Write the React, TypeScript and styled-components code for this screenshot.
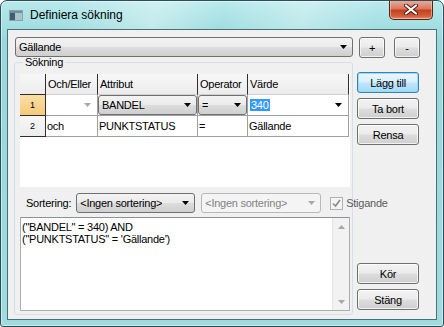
import React from "react";
import styled, { createGlobalStyle } from "styled-components";

const GlobalStyle = createGlobalStyle`
  html, body {
    margin: 0;
    padding: 0;
    background: #fff;
    overflow: hidden;
  }
  body {
    font-family: "Liberation Sans", Arial, sans-serif;
    font-size: 11px;
    letter-spacing: -0.25px;
    color: #000;
  }
`;

const btnFace = "linear-gradient(#f3f3f3 0, #ebebeb 48%, #dddddd 52%, #cfcfcf 100%)";

const Window = styled.div`
  box-sizing: border-box;
  width: 444px;
  height: 327px;
  display: flex;
  flex-direction: column;
  border: 1px solid #2f4c57;
  border-radius: 7px 7px 3px 3px;
  background: linear-gradient(#b8eaec 0, #97d8dc 40px, #9edcdf 100%);
  box-shadow: inset 0 0 0 1px rgba(255, 255, 255, 0.45);
  overflow: hidden;
`;

const TitleBar = styled.div`
  height: 28px;
  flex: none;
  display: flex;
  align-items: center;
  padding-left: 7px;
  background: linear-gradient(
    100deg,
    rgba(255, 255, 255, 0) 15%,
    rgba(255, 255, 255, 0.35) 35%,
    rgba(255, 255, 255, 0) 50%,
    rgba(255, 255, 255, 0.3) 68%,
    rgba(255, 255, 255, 0) 85%
  );
`;

const TitleText = styled.span`
  margin-left: 6px;
  font-family: "Liberation Sans", Arial, sans-serif;
  font-size: 12px;
  letter-spacing: 0;
  color: #000;
`;

const CloseButton = styled.div`
  box-sizing: border-box;
  align-self: flex-start;
  margin: -1px 10px 0 auto;
  width: 44px;
  height: 20px;
  display: flex;
  align-items: center;
  justify-content: center;
  border: 1px solid #5a2215;
  border-top: none;
  border-radius: 0 0 5px 5px;
  background: linear-gradient(#eab1a3 0, #d9785f 45%, #c5401f 55%, #d2603d 85%, #e09071 100%);
  box-shadow: inset 0 0 0 1px rgba(255, 220, 210, 0.5);
`;

const Client = styled.div`
  flex: 1;
  display: flex;
  flex-direction: column;
  margin: 0 6px 6px;
  border: 1px solid #4b6e78;
  background: #f0f0f0;
`;

const TopRow = styled.div`
  display: flex;
  align-items: flex-start;
  height: 20px;
  padding: 7px 0 0 7px;
`;

const Combo = styled.div<{ $w?: number; $disabled?: boolean; $h?: number }>`
  box-sizing: border-box;
  flex: none;
  width: ${(p) => (p.$w ? `${p.$w}px` : "100%")};
  height: ${(p) => (p.$h ? `${p.$h}px` : "100%")};
  display: flex;
  align-items: center;
  justify-content: space-between;
  gap: 4px;
  padding: 0 5px 0 3px;
  border: 1px solid ${(p) => (p.$disabled ? "#b5b9bc" : "#707070")};
  border-radius: 3px;
  background: ${(p) => (p.$disabled ? "#f4f4f4" : btnFace)};
  color: ${(p) => (p.$disabled ? "#838383" : "#000")};
  white-space: nowrap;

  & > span {
    overflow: hidden;
  }
  & > svg {
    flex: none;
  }
`;

const Button = styled.button<{ $focused?: boolean; $w?: number }>`
  box-sizing: border-box;
  width: ${(p) => p.$w ?? 62}px;
  height: 21px;
  flex: none;
  padding: 0;
  font: inherit;
  letter-spacing: inherit;
  color: #000;
  border: 1px solid ${(p) => (p.$focused ? "#3c7fb1" : "#707070")};
  border-radius: 3px;
  background: ${(p) =>
    p.$focused
      ? "linear-gradient(#eaf6fd 0, #d9f0fc 48%, #bee6fd 52%, #a7d9f5 100%)"
      : btnFace};
  box-shadow: inset 0 0 0 1px ${(p) => (p.$focused ? "rgba(140, 220, 250, 0.9)" : "rgba(255, 255, 255, 0.7)")};
`;

const Main = styled.div`
  flex: 1;
  display: flex;
  margin: 0 0 4px 6px;
`;

const Group = styled.fieldset`
  box-sizing: border-box;
  width: 339px;
  flex: none;
  margin: 0;
  padding: 0 2px 3px 5px;
  min-width: 0;
  display: flex;
  flex-direction: column;
  border: 1px solid #d5dfe5;
  border-radius: 3px;
`;

const GroupLegend = styled.legend`
  margin-left: 3px;
  padding: 0 2px;
  line-height: 10px;
`;

const Grid = styled.div`
  display: grid;
  grid-template-columns: 26px 52px 100px 50px 101px;
  grid-template-rows: 21px 21px 21px;
  align-content: start;
  width: 330px;
  height: 113px;
  margin-top: 7px;
  flex: none;
  background: #fff;
`;

const HeadCell = styled.div<{ $corner?: boolean }>`
  box-sizing: border-box;
  display: flex;
  align-items: center;
  padding-left: 2px;
  background: linear-gradient(#f7f7f7, #ececec);
  border-right: 1px solid #2e2e2e;
  border-bottom: 1px solid ${(p) => (p.$corner ? "#2e2e2e" : "#d0d0d0")};
  white-space: nowrap;
  overflow: hidden;
`;

const RowHead = styled.div<{ $active?: boolean }>`
  box-sizing: border-box;
  display: flex;
  align-items: center;
  justify-content: center;
  font-size: 9px;
  background: ${(p) => (p.$active ? "linear-gradient(#fbdfa6, #f6c97a)" : "linear-gradient(#f7f7f7, #ececec)")};
  border-right: 1px solid #2e2e2e;
  border-bottom: 1px solid #2e2e2e;
`;

const Cell = styled.div<{ $end?: boolean }>`
  box-sizing: border-box;
  display: flex;
  align-items: center;
  justify-content: ${(p) => (p.$end ? "space-between" : "flex-start")};
  padding: 0 ${(p) => (p.$end ? "6px" : "0")} 0 1px;
  border-right: 1px solid #a0a0a0;
  border-bottom: 1px solid #a0a0a0;
  white-space: nowrap;
  overflow: hidden;
`;

const ComboCell = styled.div`
  box-sizing: border-box;
  border-right: 1px solid #a0a0a0;
  border-bottom: 1px solid #a0a0a0;
`;

const Selected = styled.span`
  background: #3399ff;
  color: #fff;
  padding: 0 1px;
  margin-left: 1px;
`;

const SortRow = styled.div`
  display: flex;
  align-items: center;
  height: 20px;
  margin-top: 6px;
  flex: none;
  white-space: nowrap;
`;

const SortLabel = styled.span`
  flex: none;
  margin: 0 5px 0 6px;
`;

const CheckBox = styled.span`
  box-sizing: border-box;
  flex: none;
  width: 13px;
  height: 13px;
  margin-left: 9px;
  display: flex;
  align-items: center;
  justify-content: center;
  border: 1px solid #b1b1b1;
  background: #f4f4f4;
`;

const CheckLabel = styled.span`
  flex: none;
  margin-left: 3px;
  color: #5c5c5c;
`;

const Memo = styled.div`
  box-sizing: border-box;
  flex: 1;
  width: 330px;
  margin-top: 4px;
  display: flex;
  border: 1px solid #abadb3;
  border-top-color: #8e9197;
  background: #fff;
`;

const MemoText = styled.div`
  flex: 1;
  padding: 3px 0 0 1px;
  line-height: 12px;
  white-space: pre;
`;

const ScrollBar = styled.div`
  width: 17px;
  display: flex;
  flex-direction: column;
  justify-content: space-between;
  align-items: center;
  padding: 7px 0 6px;
  box-sizing: border-box;
  background: #f2f2f2;
  border-left: 1px solid #e4e4e4;
`;

const ButtonColumn = styled.div`
  display: flex;
  flex-direction: column;
  gap: 5px;
  margin-left: 4px;
  padding: 15px 0 5px;
`;

const Spacer = styled.div`
  flex: 1;
`;

const Arrow = ({ color = "#000", up = false }: { color?: string; up?: boolean }) => (
  <svg width="7" height="4" viewBox="0 0 7 4">
    <path d={up ? "M0 4h7L3.5 0z" : "M0 0h7L3.5 4z"} fill={color} />
  </svg>
);

const AppIcon = () => (
  <svg width="16" height="16" viewBox="0 0 16 16">
    <rect x="1.5" y="3.5" width="13" height="10" fill="#e8f0f2" stroke="#8aa3ab" />
    <rect x="2" y="4" width="5" height="9" fill="#3f5f6b" />
    <rect x="7" y="4" width="7" height="9" fill="#a9c3cb" />
    <rect x="2" y="4" width="12" height="2" fill="#6f8f9a" />
  </svg>
);

const CloseGlyph = () => (
  <svg width="14" height="11" viewBox="0 0 14 11">
    <path d="M2 1.5l10 8M12 1.5l-10 8" stroke="#4a1a10" strokeWidth="4" strokeLinecap="round" />
    <path d="M2 1.5l10 8M12 1.5l-10 8" stroke="#fff" strokeWidth="2.2" strokeLinecap="round" />
  </svg>
);

const Check = () => (
  <svg width="9" height="9" viewBox="0 0 9 9">
    <path d="M1 4.5l2.5 2.5L8 1" stroke="#8a8a8a" strokeWidth="1.6" fill="none" />
  </svg>
);

export default function App() {
  return (
    <>
      <GlobalStyle />
      <Window>
        <TitleBar>
          <AppIcon />
          <TitleText>Definiera sökning</TitleText>
          <CloseButton>
            <CloseGlyph />
          </CloseButton>
        </TitleBar>
        <Client>
          <TopRow>
            <Combo $w={338} $h={20}>
              <span>Gällande</span>
              <Arrow />
            </Combo>
            <Button $w={26} style={{ marginLeft: 6 }}>+</Button>
            <Button $w={26} style={{ marginLeft: 9 }}>-</Button>
          </TopRow>
          <Main>
            <Group>
              <GroupLegend>Sökning</GroupLegend>
              <Grid>
                <HeadCell $corner />
                <HeadCell>Och/Eller</HeadCell>
                <HeadCell>Attribut</HeadCell>
                <HeadCell>Operator</HeadCell>
                <HeadCell>Värde</HeadCell>

                <RowHead $active>1</RowHead>
                <Cell $end>
                  <span />
                  <Arrow color="#a8a8a8" />
                </Cell>
                <ComboCell>
                  <Combo>
                    <span>BANDEL</span>
                    <Arrow />
                  </Combo>
                </ComboCell>
                <ComboCell>
                  <Combo>
                    <span>=</span>
                    <Arrow />
                  </Combo>
                </ComboCell>
                <Cell $end>
                  <Selected>340</Selected>
                  <Arrow />
                </Cell>

                <RowHead>2</RowHead>
                <Cell>och</Cell>
                <Cell>PUNKTSTATUS</Cell>
                <Cell>=</Cell>
                <Cell>Gällande</Cell>
              </Grid>
              <SortRow>
                <SortLabel>Sortering:</SortLabel>
                <Combo $w={119} $h={20}>
                  <span>&lt;Ingen sortering&gt;</span>
                  <Arrow />
                </Combo>
                <Combo $w={120} $h={20} $disabled style={{ marginLeft: 6 }}>
                  <span>&lt;Ingen sortering&gt;</span>
                  <Arrow color="#a8a8a8" />
                </Combo>
                <CheckBox>
                  <Check />
                </CheckBox>
                <CheckLabel>Stigande</CheckLabel>
              </SortRow>
              <Memo>
                <MemoText>
                  {`("BANDEL" = 340) AND\n("PUNKTSTATUS" = 'Gällande')`}
                </MemoText>
                <ScrollBar>
                  <Arrow color="#a8a8a8" up />
                  <Arrow color="#a8a8a8" />
                </ScrollBar>
              </Memo>
            </Group>
            <ButtonColumn>
              <Button $focused>Lägg till</Button>
              <Button>Ta bort</Button>
              <Button>Rensa</Button>
              <Spacer />
              <Button>Kör</Button>
              <Button>Stäng</Button>
            </ButtonColumn>
          </Main>
        </Client>
      </Window>
    </>
  );
}
